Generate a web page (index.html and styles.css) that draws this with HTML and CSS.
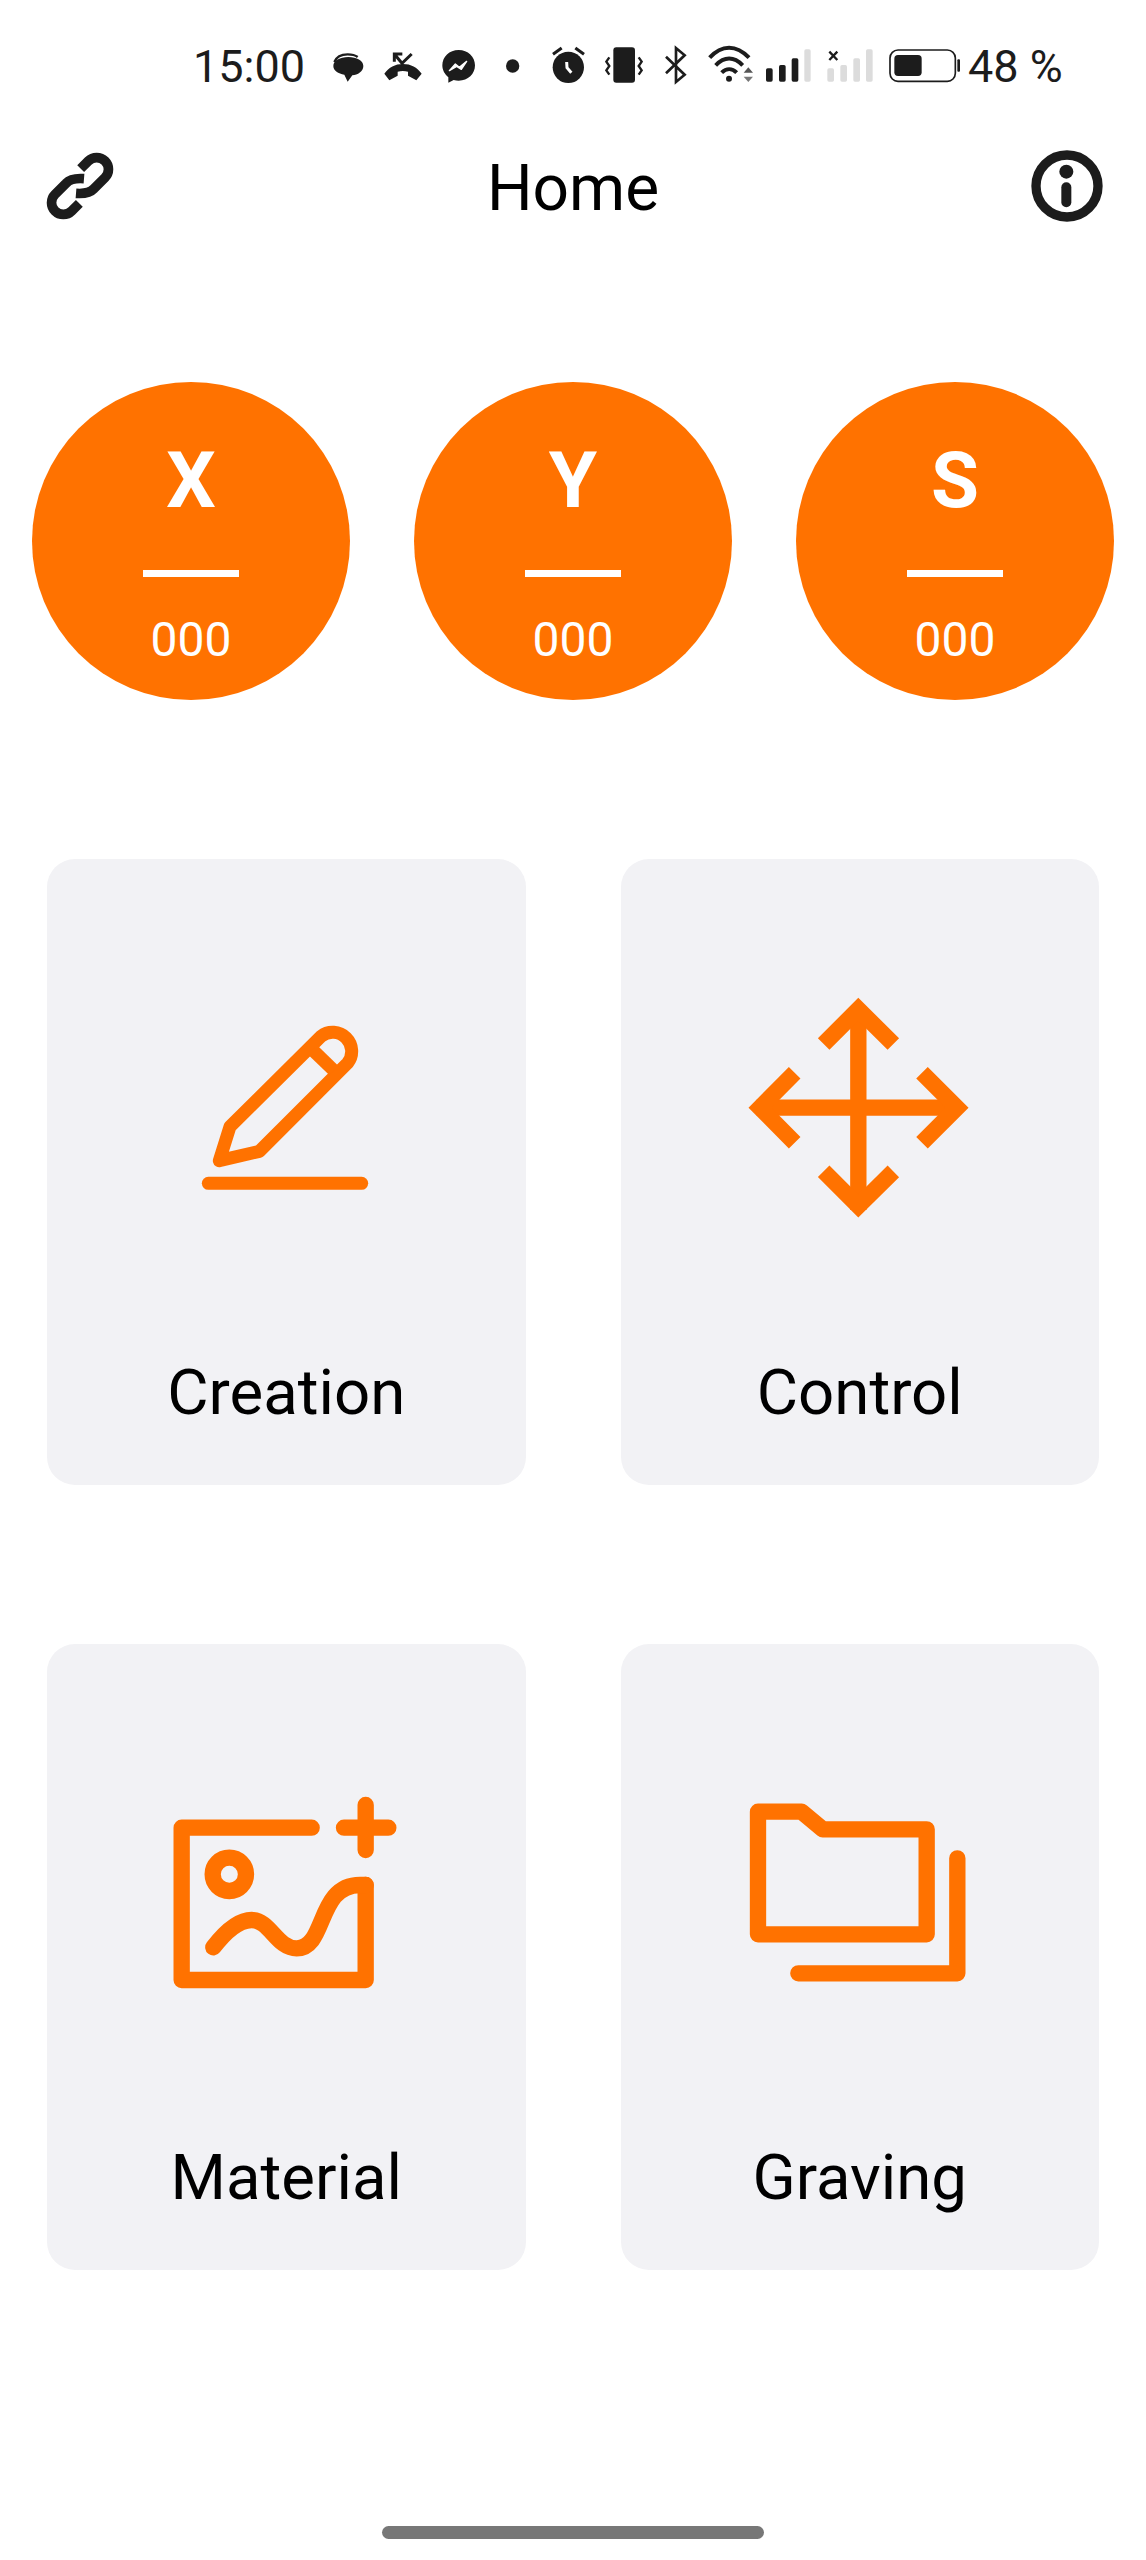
FILE: index.html
```html
<!DOCTYPE html>
<html lang="en">
<head>
    <meta charset="UTF-8">
    <meta name="viewport" content="width=device-width, initial-scale=1.0">
    <title>Home</title>
    <link rel="stylesheet" href="styles.css">
</head>
<body>
    <div class="page">

        <!-- status bar -->
        <div class="status">
            <span class="status-time">15:00</span>
            <svg class="ic-chat" viewBox="456 0 96 210"><path d="M460 108c0-16 20-27 45-27s45 11 45 27-17 27-33 28l-14 19-10-21c-18-3-33-12-33-26z" fill="#1c1c1c"/><path d="M463 96c6-15 22-23 40-23 12 0 22 2 30 8" fill="none" stroke="#1c1c1c" stroke-width="7"/></svg>
            <svg class="ic-call" viewBox="612 0 114 210"><path d="M613 131c14-19 32-29 56-29s42 10 56 29l-16 20-25-14v-12c-10-3-21-3-31 0v12l-25 14z" fill="#1c1c1c"/><path d="M695 72l-29 28-20-24M643 95V72h24" fill="none" stroke="#1c1c1c" stroke-width="9"/></svg>
            <svg class="ic-messenger" viewBox="786 0 102 210"><path d="M836 60c28 0 49 20 49 46s-21 46-49 46c-5 0-10-1-15-2l-16 8v-16c-11-9-18-22-18-36 0-26 21-46 49-46z" fill="#1c1c1c"/><path d="M808 122l18-20 12 10 22-18-16 24-14-9z" fill="#fff" stroke="#fff" stroke-width="4" stroke-linejoin="round"/></svg>
            <svg class="ic-dot" viewBox="975 0 45 210"><circle cx="998" cy="108" r="20" fill="#1c1c1c"/></svg>
            <svg class="ic-alarm" viewBox="1116 0 102 210"><circle cx="1165" cy="112" r="47" fill="#1c1c1c"/><path d="M1119 73l26-19M1212 73l-26-19" stroke="#1c1c1c" stroke-width="9" fill="none"/><path d="M1160 96l1 17 13 15" fill="none" stroke="#fff" stroke-width="9"/></svg>
            <svg class="ic-vibrate" viewBox="1275 0 114 210"><rect x="1300" y="52" width="65" height="106" rx="9" fill="#1c1c1c"/><path d="M1288 82l-9 13 9 13-9 13 9 13M1376 82l9 13-9 13 9 13-9 13" fill="none" stroke="#1c1c1c" stroke-width="7"/></svg>
            <svg class="ic-bt" viewBox="1452 0 72 210"><path d="M1458 80l56 54-26 22V54l26 22-56 54" fill="none" stroke="#1c1c1c" stroke-width="8"/></svg>
            <svg class="ic-wifi" viewBox="84 0 138 210"><path d="M89 83c36-40 80-40 118 0M107 106c26-27 55-27 81 0M125 128c14-14 31-14 45 0" fill="none" stroke="#1c1c1c" stroke-width="12"/><circle cx="147" cy="146" r="9" fill="#1c1c1c"/><path d="M205 112l14 16h-28z" fill="#555"/><path d="M205 156l-14-16h28z" fill="#777"/></svg>
            <svg class="ic-sig1" viewBox="255 0 138 210"><rect x="258" y="115" width="20" height="40" rx="5" fill="#1c1c1c"/><rect x="297" y="105" width="20" height="50" rx="5" fill="#1c1c1c"/><rect x="335" y="85" width="20" height="70" rx="5" fill="#1c1c1c"/><rect x="373" y="58" width="19" height="97" rx="5" fill="#dcdcdc"/></svg>
            <svg class="ic-sig2" viewBox="438 0 141 210"><rect x="442" y="115" width="20" height="40" rx="5" fill="#dcdcdc"/><rect x="481" y="105" width="20" height="50" rx="5" fill="#dcdcdc"/><rect x="520" y="85" width="20" height="70" rx="5" fill="#dcdcdc"/><rect x="558" y="58" width="20" height="97" rx="5" fill="#dcdcdc"/><path d="M448 65l24 25M472 65l-24 25" stroke="#1c1c1c" stroke-width="7"/></svg>
            <svg class="ic-battery" viewBox="624 0 219 210"><rect x="630" y="60" width="196" height="94" rx="24" fill="none" stroke="#1c1c1c" stroke-width="5"/><rect x="643" y="75" width="82" height="63" rx="11" fill="#1c1c1c"/><rect x="832" y="88" width="8" height="37" rx="3" fill="#1c1c1c"/></svg>
            <span class="status-batt">48 %</span>
        </div>

        <!-- header -->
        <div class="topbar">
            <svg class="top-icon" viewBox="18 9 330 330">
                <path d="M182 116L205 93A35 35 0 0 1 255 143L222 176Q206 193 168 190" fill="none" stroke="#1c1c1c" stroke-width="29"/>
                <path d="M178 220L155 243A35 35 0 0 1 105 193L138 160Q154 143 192 146" fill="none" stroke="#1c1c1c" stroke-width="29"/>
            </svg>
            <h1 class="title">Home</h1>
            <svg class="top-icon info" viewBox="0 9 330 330">
                <circle cx="171" cy="168" r="93" fill="none" stroke="#1c1c1c" stroke-width="28"/>
                <circle cx="169" cy="125" r="21" fill="#1c1c1c"/>
                <path d="M169 172V217" stroke="#1c1c1c" stroke-width="30" stroke-linecap="round"/>
            </svg>
        </div>

        <!-- assi -->
        <div class="axes">
            <div class="axis"><span class="axis-name">X</span><span class="axis-line"></span><span class="axis-value">000</span></div>
            <div class="axis"><span class="axis-name">Y</span><span class="axis-line"></span><span class="axis-value">000</span></div>
            <div class="axis"><span class="axis-name">S</span><span class="axis-line"></span><span class="axis-value">000</span></div>
        </div>

        <!-- menu -->
        <div class="menu">
            <div class="card">
                <svg class="card-icon" viewBox="-72 -60 780 720" fill="none" stroke="#ff7200" stroke-width="39" stroke-linejoin="round" stroke-linecap="round">
                    <path d="M118 482L150 380L423 109A57 57 0 0 1 503 189L238 454Z"/>
                    <path d="M398 150L462 212" stroke-linecap="butt"/>
                    <path d="M85 550H545"/>
                </svg>
                <span class="card-label">Creation</span>
            </div>
            <div class="card">
                <svg class="card-icon" viewBox="0 0 780 720" fill="none" stroke="#ff7200" stroke-width="49" stroke-miterlimit="4">
                    <path d="M385 80V690M80 383H690"/>
                    <path d="M281 192L385 88L490 192M281 574L385 678L490 574M194 278L90 383L194 488M576 278L681 383L576 488"/>
                </svg>
                <span class="card-label">Control</span>
            </div>
            <div class="card">
                <svg class="card-icon" viewBox="-12 -45 780 720" fill="none" stroke="#ff7200" stroke-width="49" stroke-linejoin="round" stroke-linecap="round">
                    <path d="M455 143H65V600H617V315"/>
                    <path d="M552 143H685M617 75V210"/>
                    <circle cx="208" cy="283" r="50"/>
                    <path d="M160 502C200 450 240 420 275 420C330 420 350 505 410 505C500 505 470 315 600 315H617"/>
                </svg>
                <span class="card-label">Material</span>
            </div>
            <div class="card">
                <svg class="card-icon" viewBox="0 -45 780 720" fill="none" stroke="#ff7200" stroke-width="49" stroke-linejoin="round" stroke-linecap="round">
                    <path d="M84 95H215L278 148H590V463H84Z"/>
                    <path d="M682 235V580H205"/>
                </svg>
                <span class="card-label">Graving</span>
            </div>
        </div>

        <div class="home-bar"></div>
    </div>
</body>
</html>
```

FILE: styles.css
```css
* {
    box-sizing: border-box;
}

body {
    margin: 0;
    background-color: #fff;
    color: #000;
    font-family: Roboto, "Liberation Sans", sans-serif;
}

.page {
    height: 2560px;
    display: flex;
    flex-direction: column;
    overflow: hidden;
}

/* Barra di stato */
.status {
    height: 130px;
    padding-left: 193px;
    display: flex;
    align-items: center;
    color: #1c1c1c;
    font-size: 45px;
}
.status svg {
    height: 70px;
    flex: none;
}
.status-time {
    width: 139px;
    padding-top: 2px;
}
.status-batt {
    margin-left: 7px;
    padding-top: 2px;
    white-space: nowrap;
}
.ic-chat { width: 32px; }
.ic-call { width: 38px; margin-left: 20px; }
.ic-messenger { width: 34px; margin-left: 20px; }
.ic-dot { width: 15px; margin-left: 29px; }
.ic-alarm { width: 34px; margin-left: 32px; }
.ic-vibrate { width: 38px; margin-left: 19px; }
.ic-bt { width: 24px; margin-left: 21px; }
.ic-wifi { width: 46px; margin-left: 20px; }
.ic-sig1 { width: 46px; margin-left: 11px; }
.ic-sig2 { width: 47px; margin-left: 15px; }
.ic-battery { width: 73px; margin-left: 15px; }

/* Header */
.topbar {
    height: 116px;
    padding: 0 26px;
    display: grid;
    grid-template-columns: 1fr auto 1fr;
    align-items: center;
}
.top-icon {
    width: 110px;
    height: 110px;
}
.top-icon.info {
    justify-self: end;
}
.title {
    margin: 0;
    font-size: 64px;
    font-weight: 400;
}

/* Cerchi */
.axes {
    margin-top: 136px;
    padding: 0 32px;
    display: flex;
    justify-content: space-between;
}
.axis {
    width: 318px;
    height: 318px;
    border-radius: 50%;
    background-color: #ff7200;
    color: #fff;
    display: flex;
    flex-direction: column;
    align-items: center;
}
.axis-name {
    margin-top: 53px;
    font-size: 78px;
    line-height: 92px;
    font-weight: 700;
}
.axis-line {
    width: 96px;
    height: 7px;
    margin-top: 43px;
    background-color: #fff;
}
.axis-value {
    margin-top: 33px;
    font-size: 48px;
    line-height: 60px;
}

/* Griglia */
.menu {
    margin-top: 159px;
    padding: 0 47px;
    display: grid;
    grid-template-columns: 1fr 1fr;
    column-gap: 95px;
    row-gap: 159px;
}
.card {
    height: 626px;
    padding-top: 121px;
    border-radius: 28px;
    background-color: #f2f2f5;
    display: flex;
    flex-direction: column;
    align-items: center;
}
.card-icon {
    width: 260px;
    height: 240px;
    flex: none;
}
.card-label {
    margin-top: 133px;
    font-size: 63.5px;
    line-height: 80px;
}

.home-bar {
    width: 382px;
    height: 13px;
    margin: auto auto 21px;
    border-radius: 7px;
    background-color: #777;
}
```
